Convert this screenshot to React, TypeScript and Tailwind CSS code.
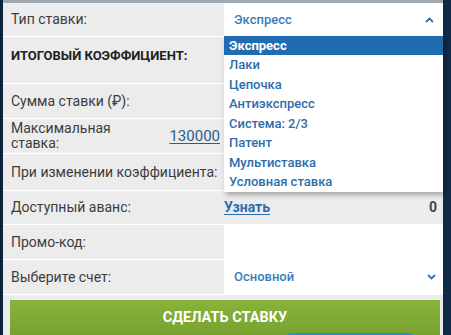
const BET_TYPES = [
  "Экспресс",
  "Лаки",
  "Цепочка",
  "Антиэкспресс",
  "Система: 2/3",
  "Патент",
  "Мультиставка",
  "Условная ставка",
];

function Chevron({ up }: { up?: boolean }) {
  return (
    <svg width="9" height="6" viewBox="0 0 9 6" className="shrink-0">
      <polyline
        points={up ? "1,5 4.5,1.5 8,5" : "1,1 4.5,4.5 8,1"}
        fill="none"
        stroke="#2f72b0"
        strokeWidth="1.8"
      />
    </svg>
  );
}

function Row({
  h,
  children,
  right,
}: {
  h: string;
  children: React.ReactNode;
  right?: React.ReactNode;
}) {
  return (
    <div className={`flex shrink-0 border-b border-white ${h}`}>
      <div className="flex w-[221px] items-center pl-[8px] pr-[4px]">{children}</div>
      <div className="flex flex-1">{right}</div>
    </div>
  );
}

export default function App() {
  return (
    <div
      className="flex h-[335px] w-[451px] overflow-hidden bg-[#ececec]"
      style={{ fontFamily: "Roboto, 'Noto Sans', sans-serif" }}
    >
      {/* левая полоса */}
      <div className="w-[3px] bg-[#0c2238]" />

      <div className="relative flex w-[440px] flex-col border-t-[3px] border-[#a0a9b0]">
        <Row
          h="h-[34px]"
          right={
            <div className="flex flex-1 items-center justify-between bg-white pl-[10px] pr-[9px]">
              <span className="text-[13px] font-medium text-[#3a7cb8]">Экспресс</span>
              <Chevron up />
            </div>
          }
        >
          <span className="text-[14px] text-[#3c3c3c]">Тип ставки:</span>
        </Row>

        <Row h="h-[47px]">
          <span className="-mt-[9px] text-[13px] font-bold text-[#222]">ИТОГОВЫЙ КОЭФФИЦИЕНТ:</span>
        </Row>

        <Row h="h-[35px]" right={<div className="flex-1 bg-white" />}>
          <span className="text-[14px] text-[#3c3c3c]">Сумма ставки (₽):</span>
        </Row>

        <Row h="h-[35px]">
          <div className="flex w-full items-center justify-between">
            <span className="text-[14px] leading-[15px] text-[#3c3c3c]">
              Максимальная
              <br />
              ставка:
            </span>
            <span className="text-[15px] text-[#2c5d8c] underline underline-offset-2">130000</span>
          </div>
        </Row>

        <Row h="h-[37px]">
          <span className="whitespace-nowrap text-[14px] text-[#3c3c3c]">При изменении коэффициента:</span>
        </Row>

        <Row
          h="h-[34px]"
          right={
            <div className="flex flex-1 items-center justify-between pr-[6px]">
              <span className="text-[14px] font-bold text-[#2a6db0] underline underline-offset-2">Узнать</span>
              <span className="text-[14px] font-bold text-[#444]">0</span>
            </div>
          }
        >
          <span className="text-[14px] text-[#3c3c3c]">Доступный аванс:</span>
        </Row>

        <Row h="h-[35px]" right={<div className="flex-1 bg-white" />}>
          <span className="text-[14px] text-[#3c3c3c]">Промо-код:</span>
        </Row>

        <Row
          h="h-[35px]"
          right={
            <div className="flex flex-1 items-center justify-between bg-white pl-[10px] pr-[7px]">
              <span className="text-[13px] font-medium text-[#3a7cb8]">Основной</span>
              <Chevron />
            </div>
          }
        >
          <span className="text-[14px] text-[#3c3c3c]">Выберите счет:</span>
        </Row>

        {/* кнопка */}
        <div className="mt-[5px] ml-[7px] mr-[3px] flex h-[40px] shrink-0 justify-center bg-gradient-to-b from-[#88b43a] to-[#75a02e] pt-[7px]">
          <span className="text-[14.5px] font-bold uppercase text-white">Сделать ставку</span>
        </div>

        {/* выпадающий список */}
        <div className="absolute left-[221px] top-[33px] w-[219px] bg-white shadow-[2px_3px_5px_rgba(0,0,0,0.3)]">
          {BET_TYPES.map((t, i) => (
            <div
              key={t}
              className={
                i === 0
                  ? "flex h-[19px] items-center bg-[#1f6db0] pl-[5px] text-[13px] font-bold text-white"
                  : "flex h-[19.5px] items-center pl-[5px] text-[13px] font-medium text-[#2d6eaa]"
              }
            >
              {t}
            </div>
          ))}
        </div>

        <div className="absolute left-[285px] top-[330px] h-[4px] w-[125px] rounded-t-[3px] bg-[#2c8ad6]" />
      </div>

      {/* правая полоса */}
      <div className="flex-1 bg-[#0f2b47]" />
    </div>
  );
}
